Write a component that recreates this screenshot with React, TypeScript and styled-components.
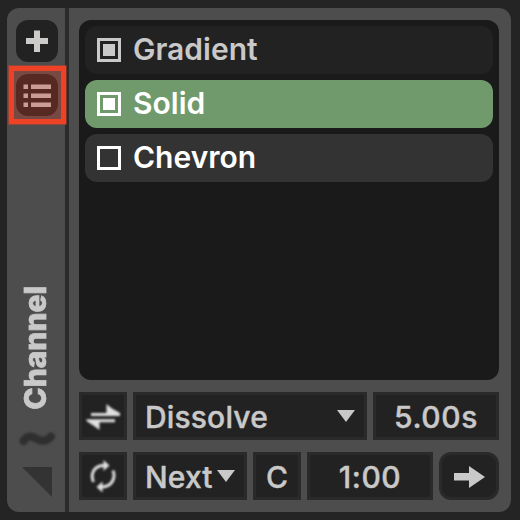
import React from "react";
import styled, { createGlobalStyle } from "styled-components";

const Global = createGlobalStyle`
  * { box-sizing: border-box; }
  body { margin: 0; background: #242424; }
`;

const Page = styled.div`
  width: 520px;
  height: 520px;
  padding: 8px 9px 8px 7px;
  background: #242424;
  font-family: Inter, "Liberation Sans", sans-serif;
  font-size: 30px;
  font-weight: 500;
  line-height: 36px;
  color: #c9c9c9;
  overflow: hidden;
`;

const Panel = styled.div`
  display: flex;
  width: 504px;
  height: 504px;
  border-radius: 12px;
  background: #4d4d4d;
  overflow: hidden;
`;

const Sidebar = styled.div`
  position: relative;
  display: flex;
  flex-direction: column;
  width: 62px;
  padding: 12px 9px 15px;
  border-right: 4px solid #2b2b2b;
`;

const SideButton = styled.button`
  display: block;
  width: 42px;
  height: 42px;
  margin: 0 0 12px;
  padding: 0;
  border: 0;
  border-radius: 12px;
  background: #222;
`;

const Highlight = styled.div`
  position: absolute;
  left: 2px;
  top: 58px;
  width: 57px;
  height: 58px;
  border: 5px solid #ed4226;
  background: rgba(237, 66, 38, 0.26);
  box-shadow: 0 0 0 1px rgba(237, 66, 38, 0.4);
`;

const Spacer = styled.div`
  flex: 1;
`;

const ChannelLabel = styled.div`
  align-self: center;
  writing-mode: vertical-rl;
  transform: rotate(180deg);
  font-weight: 800;
  font-size: 30px;
  line-height: 36px;
  margin: 0 2px 18px 0;
  -webkit-text-stroke: 0.7px currentColor;
`;

const SideGlyph = styled.svg`
  display: block;
  flex: none;
  overflow: visible;
`;

const SoftGlyph = styled(SideGlyph)`
  filter: blur(0.8px);
  margin-bottom: 9px;
`;

const Main = styled.div`
  display: flex;
  flex-direction: column;
  gap: 12px;
  width: 442px;
  padding: 12px 12px 12px 10px;
`;

const List = styled.div`
  display: flex;
  flex-direction: column;
  gap: 6px;
  height: 360px;
  padding: 6px;
  border-radius: 12px;
  background: #1a1a1a;
`;

const Item = styled.div<{ $bg: string; $fg: string }>`
  display: flex;
  align-items: center;
  gap: 12px;
  height: 48px;
  padding: 0 12px;
  border-radius: 12px;
  background: ${(p) => p.$bg};
  color: ${(p) => p.$fg};
  font-weight: 600;
`;

const Check = styled.span<{ $on: boolean }>`
  display: grid;
  place-items: center;
  width: 24px;
  height: 24px;
  border: 3px solid currentColor;

  &::after {
    content: "";
    width: 12px;
    height: 12px;
    background: ${(p) => (p.$on ? "currentColor" : "transparent")};
  }
`;

const ItemName = styled.span`
  white-space: nowrap;
  padding-bottom: 2px;
`;

const Controls = styled.div`
  display: flex;
  gap: 6px;
  height: 48px;
`;

const Field = styled.div<{ $w: number; $round?: boolean; $start?: boolean }>`
  display: flex;
  align-items: center;
  justify-content: ${(p) => (p.$start ? "space-between" : "center")};
  width: ${(p) => p.$w}px;
  height: 48px;
  padding: ${(p) => (p.$start ? "0 9px" : "0")};
  border: 3px solid #2a2a2a;
  border-radius: ${(p) => (p.$round ? 12 : 0)}px;
  background: #222;
  white-space: nowrap;
`;

const Value = styled.span<{ $track?: number }>`
  padding-top: 2px;
  letter-spacing: ${(p) => p.$track ?? 0.15}px;
  -webkit-text-stroke: 0.4px currentColor;
`;

const Caret = styled.svg`
  flex: none;
  display: block;
  margin-top: -1px;
`;

const Icon = styled.svg`
  display: block;
`;

const SoftIcon = styled(Icon)`
  filter: blur(0.8px);
`;

const items = [
  { name: "Gradient", on: true, bg: "#222", fg: "#c9c9c9" },
  { name: "Solid", on: true, bg: "#70996c", fg: "#fff" },
  { name: "Chevron", on: false, bg: "#333", fg: "#fff" },
];

const Triangle = () => (
  <Caret width="18" height="12" viewBox="0 0 18 12">
    <path d="M0 0H18L9 12Z" fill="#c9c9c9" />
  </Caret>
);

export default function App() {
  return (
    <>
      <Global />
      <Page>
        <Panel>
          <Sidebar>
            <SideButton aria-label="Add">
              <Icon width="42" height="42">
                <path d="M18 10.500h6v7.500h8v6h-8v8h-6v-8h-8v-6h8Z" fill="#cdcaca" />
              </Icon>
            </SideButton>
            <SideButton aria-label="List">
              <Icon width="42" height="42" fill="#c0bcbc">
                <path d="M7.500 10.500h4.500v4.500H7.500ZM15 10.500h20v4.500H15ZM7.500 19.500h4.500v4.500H7.500ZM15 19.500h20v4.500H15ZM7.500 28.500h4.500v4.500H7.500ZM15 28.500h20v4.500H15Z" />
              </Icon>
            </SideButton>
            <Highlight />
            <Spacer />
            <ChannelLabel>Channel</ChannelLabel>
            <SoftGlyph width="42" height="20">
              <path
                d="M7.500 13C11 7.500 15.500 7.500 21 11C26 14 31 13.500 35 8.500"
                fill="none"
                stroke="#2f2f2f"
                strokeWidth="8"
                strokeLinecap="round"
              />
            </SoftGlyph>
            <SideGlyph width="42" height="40">
              <path d="M6 10H36V40Z" fill="#333" />
            </SideGlyph>
          </Sidebar>
          <Main>
            <List>
              {items.map((it) => (
                <Item key={it.name} $bg={it.bg} $fg={it.fg}>
                  <Check $on={it.on} />
                  <ItemName>{it.name}</ItemName>
                </Item>
              ))}
            </List>
            <Controls>
              <Field $w={48}>
                <SoftIcon width="42" height="42" fill="#e0e0e0">
                  <path d="M9 18H24.500V9L30 13.500L38 18V21H9Z" />
                  <path d="M33 24.300H4.500V26L12 31L17.500 35V27.300H33Z" />
                </SoftIcon>
              </Field>
              <Field $w={234} $start>
                <Value>Dissolve</Value>
                <Triangle />
              </Field>
              <Field $w={126}>
                <Value $track={0.6}>5.00s</Value>
              </Field>
            </Controls>
            <Controls>
              <Field $w={48}>
                <SoftIcon width="42" height="42" fill="none" stroke="#e0e0e0" strokeWidth="3">
                  <path d="M11.500 27C8 19 12 10.500 22 10.500" />
                  <path d="M31 15.500C34 23 30 31.500 20 32" />
                  <path d="M21.500 5L27.500 10.500L21.500 16ZM20.500 26.500L14.500 32L20.500 37.500Z" fill="#e0e0e0" stroke="none" />
                </SoftIcon>
              </Field>
              <Field $w={114} $start>
                <Value>Next</Value>
                <Triangle />
              </Field>
              <Field $w={48}>
                <Value>C</Value>
              </Field>
              <Field $w={126}>
                <Value $track={0.5}>1:00</Value>
              </Field>
              <Field $w={60} $round>
                <Icon width="54" height="42" fill="#c9c9c9">
                  <path d="M12 18H27V11L43 22L27 33V25.500H12Z" />
                </Icon>
              </Field>
            </Controls>
          </Main>
        </Panel>
      </Page>
    </>
  );
}
